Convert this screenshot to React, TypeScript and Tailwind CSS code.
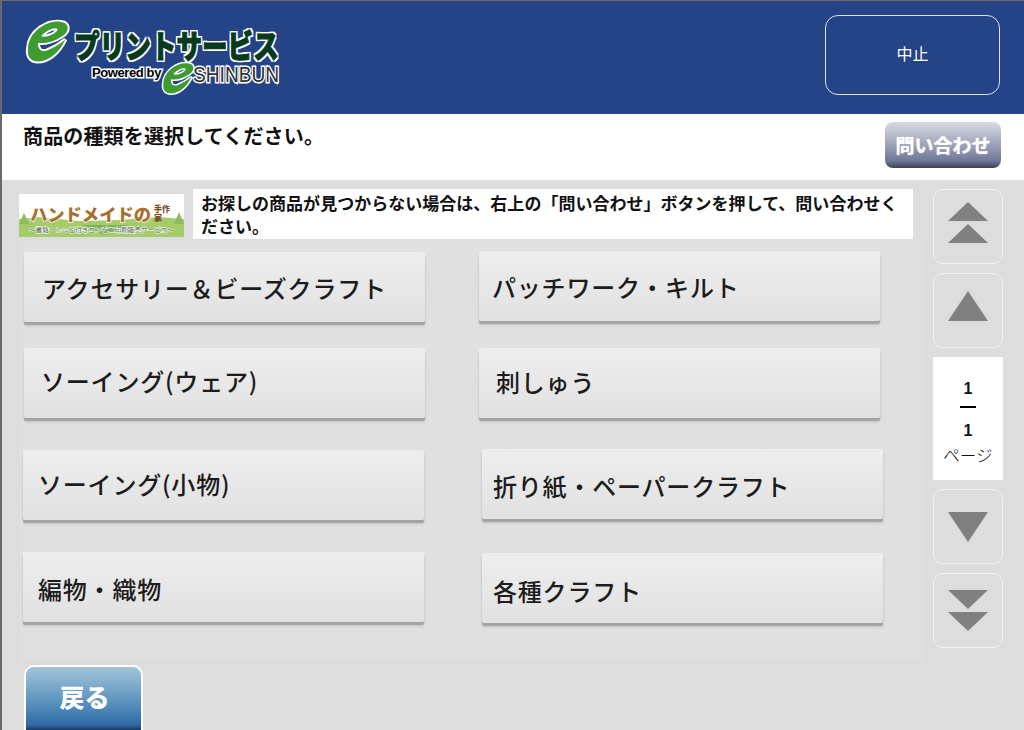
const font = "font-['Noto_Sans_CJK_JP','Noto_Sans',sans-serif]";

const leftItems = [
  { label: "アクセサリー＆ビーズクラフト", box: "mt-[12px] ml-[4px]", text: "pl-[18px] pt-[2px]" },
  { label: "ソーイング(ウェア)", box: "mt-[26px] ml-[4px]", text: "pl-[17px] pb-[4px]" },
  { label: "ソーイング(小物)", box: "mt-[32px] ml-[3px]", text: "pl-[15px] pb-[2px]" },
  { label: "編物・織物", box: "mt-[32px] ml-[3px]", text: "pl-[15px] pt-[4px]" },
];

const rightItems = [
  { label: "パッチワーク・キルト", box: "mt-[11px] ml-[54px]", text: "pl-[13px] pt-[2px]" },
  { label: "刺しゅう", box: "mt-[27px] ml-[54px]", text: "pl-[17px] pb-[2px]" },
  { label: "折り紙・ペーパークラフト", box: "mt-[31px] ml-[57px]", text: "pl-[11px] pt-[4px]" },
  { label: "各種クラフト", box: "mt-[34px] ml-[57px]", text: "pl-[11px] pt-[6px]" },
];

const CategoryButton = ({ label, box, text }: { label: string; box: string; text: string }) => (
  <button
    className={`flex h-[70px] w-[401px] items-center rounded-[2px] bg-gradient-to-b from-[#eeeeee] to-[#e1e1e1] text-left text-[24px] leading-none font-medium tracking-[0.8px] text-[#1c1c1c] shadow-[0_3px_1px_#a3a3a3,0_4px_3px_#c4c4c4] ${box} ${text}`}
  >
    {label}
  </button>
);

const ScrollButton = ({ children }: { children: React.ReactNode }) => (
  <button className="flex h-[75px] w-[70px] items-center justify-center rounded-[10px] border border-[#f4f4f4]">
    {children}
  </button>
);

// points are relative to the inside of the 75px button
const Triangles = ({ points }: { points: string[] }) => (
  <svg width="40" height="73" viewBox="0 0 40 73" fill="#808080">
    {points.map((p) => (
      <polygon key={p} points={p} />
    ))}
  </svg>
);

const EGlyph = ({ className, size, stroke }: { className: string; size: number; stroke: number }) => (
  <svg className={className} width={size} height={size} viewBox="0 0 60 60">
    <path
      d="M10 33 C11 17 28 7 40 9 C48 10 48 18 41 22 C34 27 25 29 19 28 C19 33 21 37 27 35 C32 33 38 30 44 25 C38 38 28 45 19 45 C12 45 9 40 10 33 Z M22 22 C25 18 32 14 36 15 C38 16 36 18 33 20 C29 22 25 23 22 22 Z"
      fill="#3f9a32"
      fillRule="evenodd"
      stroke="#ffffff"
      strokeWidth={stroke}
      paintOrder="stroke"
    />
  </svg>
);

const Logo = () => (
  <div className="relative h-[72px] w-[258px]">
    <EGlyph className="absolute top-[-8px] left-[-8px]" size={66} stroke={3.5} />
    <span className="absolute top-[8px] left-[49px] origin-left scale-x-[0.8] text-[32px] leading-none font-black whitespace-nowrap text-[#063a1e] [-webkit-text-stroke:1px_#063a1e] [text-shadow:2px_0_#fff,-2px_0_#fff,0_2px_#fff,0_-2px_#fff,2px_2px_#fff,-2px_2px_#fff,2px_-2px_#fff,-2px_-2px_#fff]">
      プリントサービス
    </span>
    <span className="absolute top-[46px] left-[67px] font-['Liberation_Sans',sans-serif] text-[13px] leading-none font-bold tracking-[-0.4px] whitespace-nowrap text-black [-webkit-text-stroke:3px_#ffffff] [paint-order:stroke_fill]">
      Powered by
    </span>
    <EGlyph className="absolute top-[36px] left-[130px]" size={50} stroke={3.5} />
    <span className="absolute top-[44px] left-[168px] origin-left scale-x-[0.87] font-['Liberation_Sans',sans-serif] text-[22px] leading-none whitespace-nowrap text-[#333333] [-webkit-text-stroke:3px_#ffffff] [paint-order:stroke_fill]">
      SHINBUN
    </span>
  </div>
);

const Banner = () => (
  <svg className="mt-[14px] ml-[17px] shrink-0" width="165" height="43" viewBox="0 0 165 43">
    <rect width="165" height="43" fill="#ffffff" />
    <path d="M0 25 L20 23 L60 27 L100 26 L140 23 L165 25 V43 H0 Z" fill="#a5cc6b" />
    <path d="M62 31 L85 41 L110 31 Z" fill="#7fb35a" />
    <path d="M5 19 L0 30 H10 Z M160 18 L155 30 H165 Z" fill="#8dbb62" />
    <text
      x="11"
      y="27"
      fontSize="17"
      fontWeight="900"
      fill="#a8702e"
      stroke="#ffffff"
      strokeWidth="1.5"
      paintOrder="stroke"
      textLength="121"
      lengthAdjust="spacingAndGlyphs"
    >
      ハンドメイドの
    </text>
    <text x="135" y="18" fontSize="8" fontWeight="900" fill="#7a4a1e">手作</text>
    <text x="135" y="27" fontSize="8" fontWeight="900" fill="#7a4a1e">家</text>
    <text
      x="10"
      y="38"
      fontSize="6"
      fill="#4a5a35"
      stroke="#ffffff"
      strokeWidth="1"
      paintOrder="stroke"
      textLength="145"
      lengthAdjust="spacingAndGlyphs"
    >
      ～書籍・レシピ付きコンビニ印刷販売サービス～
    </text>
  </svg>
);

export default function App() {
  return (
    <div className={`${font} flex h-[730px] w-[1024px] flex-col overflow-hidden border-t border-l-2 border-[#6a6a6a] bg-[#dddddd]`}>
      {/* Header */}
      <header className="flex h-[113px] shrink-0 items-start justify-between bg-[#254488] pr-[24px]">
        <div className="mt-[19px] ml-[23px]">
          <Logo />
        </div>
        <button className="mt-[14px] flex h-[80px] w-[175px] items-center justify-center rounded-[13px] border border-[#dfe3ee] pb-[5px] text-[16px] text-white">
          中止
        </button>
      </header>

      {/* Title row */}
      <div className="flex h-[66px] shrink-0 items-start justify-between bg-white pr-[23px]">
        <h1 className="mt-[7px] ml-[21px] text-[20px] leading-[30px] font-bold tracking-[0.15px] text-[#111111]">商品の種類を選択してください。</h1>
        <button className="mt-[8px] h-[46px] w-[116px] rounded-[8px] bg-[linear-gradient(#d8dbe5,#a4a8bc_45%,#6f7797_85%,#3d4152)] text-[19px] font-bold text-white [text-shadow:0_0_1px_#ffffff]">
          問い合わせ
        </button>
      </div>

      {/* Main */}
      <div className="flex flex-1">
        <div className="flex w-[931px] flex-col">
          <div className="flex h-[60px]">
            <Banner />
            <p className="mt-[9px] ml-[9px] h-[50px] w-[720px] bg-white px-[8px] py-[2px] text-[17px] leading-[23px] font-bold tracking-[0.02px] text-[#111111]">
              お探しの商品が見つからない場合は、右上の「問い合わせ」ボタンを押して、問い合わせください。
            </p>
          </div>
          <div className="ml-[18px] flex h-[420px] w-[904px] bg-[#e0e0e0]">
            <div className="flex flex-col">
              {leftItems.map((item) => (
                <CategoryButton key={item.label} {...item} />
              ))}
            </div>
            <div className="flex flex-col">
              {rightItems.map((item) => (
                <CategoryButton key={item.label} {...item} />
              ))}
            </div>
          </div>
          <button className="mt-[5px] ml-[22px] h-[65px] w-[119px] rounded-t-[10px] border-x-2 border-t-2 border-white bg-[linear-gradient(#a3c5d8,#5b93bf_55%,#2f6aa7_92%,#173a5c)] pb-[4px] pl-[2px] text-[25px] font-black text-white">
            戻る
          </button>
        </div>

        {/* Pager */}
        <div className="flex flex-col gap-[9px] pt-[9px]">
          <ScrollButton>
            <Triangles points={["20,12 40,31 0,31", "20,34 40,53 0,53"]} />
          </ScrollButton>
          <ScrollButton>
            <Triangles points={["20,17 40,47 0,47"]} />
          </ScrollButton>
          <div className="flex h-[123px] w-[70px] flex-col items-center bg-white pt-[22px]">
            <span className="font-['Liberation_Sans',sans-serif] text-[16px] leading-[20px] font-bold text-[#111111]">1</span>
            <span className="mt-[7px] h-[2px] w-[16px] bg-black" />
            <span className="mt-[13px] font-['Liberation_Sans',sans-serif] text-[16px] leading-[20px] font-bold text-[#111111]">1</span>
            <span className="mt-[3px] text-[16.5px] leading-[22px] font-light tracking-[0.1px] text-[#111111]">ページ</span>
          </div>
          <ScrollButton>
            <Triangles points={["0,22 40,22 20,52"]} />
          </ScrollButton>
          <ScrollButton>
            <Triangles points={["0,16 40,16 20,35", "0,38 40,38 20,57"]} />
          </ScrollButton>
        </div>
      </div>
    </div>
  );
}
